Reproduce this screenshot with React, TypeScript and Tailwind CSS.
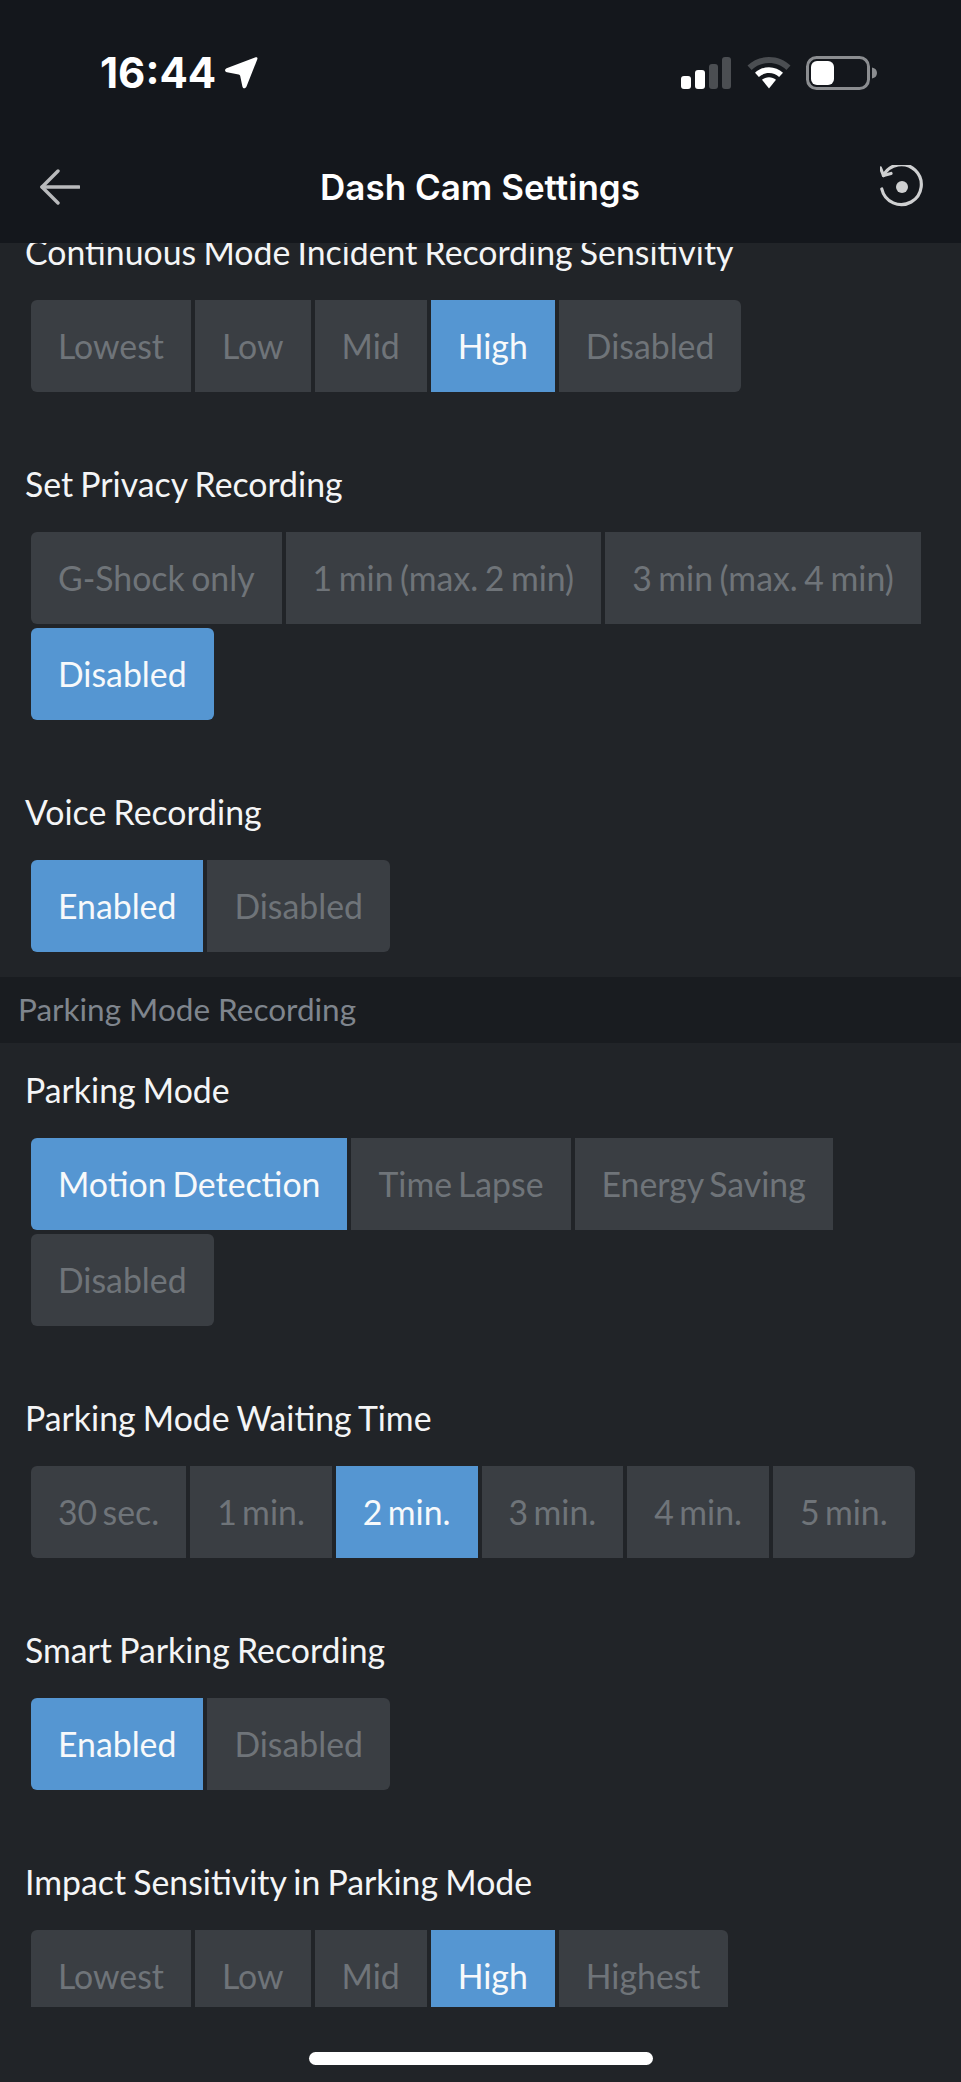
import React from 'react';

interface SegmentProps {
  options: string[];
  active: string;
  // last option sits alone on its own line, so it gets all four corners
  wrapsLast?: boolean;
  spacing?: string;
}

const Segments: React.FC<SegmentProps> = ({ options, active, wrapsLast, spacing = '[word-spacing:-2.8px]' }) => {
  return (
    <div className="flex flex-wrap gap-[4px] pl-[31px] pr-[20px]">
      {options.map((opt, i) => {
        const isFirst = i === 0;
        const isLast = i === options.length - 1;
        return (
          <div
            key={opt}
            className={`h-[92px] flex items-center px-[27px] text-[33.8px] ${spacing} ${
              opt === active ? 'bg-[#5596d2] text-[#f7f9fb]' : 'bg-[#3a3e43] text-[#6f7479]'
            } ${isFirst || (isLast && wrapsLast) ? 'rounded-l-[6px]' : ''} ${isLast ? 'rounded-r-[6px]' : ''}`}
          >
            {opt}
          </div>
        );
      })}
    </div>
  );
};

const Setting: React.FC<{ label: string; flush?: boolean } & SegmentProps> = ({ label, flush, ...rest }) => {
  return (
    <div className={`pt-[25px] pb-[25px] ${flush ? '' : 'mb-[20px]'}`}>
      <div className="h-[44px] mb-[26px] pl-[25px] flex items-center text-[33.8px] [word-spacing:-1.4px] text-[#f4f5f6] whitespace-nowrap">
        {label}
      </div>
      <Segments {...rest} />
    </div>
  );
};

const StatusIcons = () => (
  <div className="flex items-center">
    <svg width="50" height="32" viewBox="0 0 50 32" className="mr-[16px]">
      <rect x="0" y="19" width="10" height="13" rx="3" fill="#ffffff" />
      <rect x="14" y="13" width="10" height="19" rx="3" fill="#ffffff" />
      <rect x="28" y="7" width="9" height="25" rx="3" fill="#4b4e52" />
      <rect x="41" y="0" width="9" height="32" rx="3" fill="#4b4e52" />
    </svg>
    <svg width="44" height="32" viewBox="0 0 44 32" className="mr-[15px]">
      <path d="M22 0C13.5 0 6 3.2 0.5 8.6L4.6 13C9.2 8.7 15.3 6.1 22 6.1S34.8 8.7 39.4 13L43.5 8.6C38 3.2 30.5 0 22 0Z" fill="#4b4e52" />
      <path d="M22 10.2C16.6 10.2 11.7 12.3 8 15.7L11.9 19.9C14.6 17.5 18.1 16.1 22 16.1S29.4 17.5 32.1 19.9L36 15.7C32.3 12.3 27.4 10.2 22 10.2Z" fill="#ffffff" />
      <path d="M22 20.2C19.3 20.2 16.9 21.2 15 22.8L22 31.5L29 22.8C27.1 21.2 24.7 20.2 22 20.2Z" fill="#ffffff" />
    </svg>
    <svg width="72" height="34" viewBox="0 0 72 34">
      <rect x="1.5" y="1.5" width="61" height="31" rx="9" fill="none" stroke="#8b8d90" strokeWidth="3" />
      <rect x="5" y="5" width="23" height="24" rx="6" fill="#ffffff" />
      <path d="M66 11.5C69 12 71 14 71 17S69 22 66 22.5Z" fill="#8b8d90" />
    </svg>
  </div>
);

export default function App() {
  return (
    <div
      className="w-[961px] h-[2082px] overflow-hidden flex flex-col bg-[#212428]"
      style={{ fontFamily: 'Lato, "Noto Sans", sans-serif' }}
    >
      {/* Header */}
      <div className="h-[243px] shrink-0 bg-[#14171c] relative z-10 font-['Inter',sans-serif]">
        <div className="h-[130px] pl-[100px] pr-[83px] pt-[16px] flex items-center justify-between">
          <div className="flex items-center text-white text-[42px] font-bold leading-none">
            <span>16:44</span>
            <svg width="34" height="34" viewBox="0 0 34 34" className="ml-[8px]">
              <path d="M31 1.5C33 0.6 34 1.8 33.2 3.6L22.5 30.5C21.5 33 19 32.8 18.4 30.4L16.2 20C16 19 15.5 18.6 14.6 18.4L3 16.2C0.6 15.6 0.4 13.2 2.6 12.2Z" fill="#ffffff" />
            </svg>
          </div>
          <StatusIcons />
        </div>
        <div className="h-[113px] pl-[40px] pr-[38px] flex items-center justify-between">
          <svg width="40" height="36" viewBox="0 0 40 36" fill="none" stroke="#b9babc" strokeWidth="3.4" strokeLinecap="round" strokeLinejoin="round">
            <path d="M39 18H2" />
            <path d="M18 2L2 18L18 34" />
          </svg>
          <div className="text-white text-[35px] font-semibold pt-[2px]">Dash Cam Settings</div>
          <svg width="43" height="44" viewBox="0 0 43 44" fill="none">
            <path d="M3.5 10.5A20 20 0 1 1 1.8 24" stroke="#cfd0d1" strokeWidth="3.2" strokeLinecap="round" />
            <path d="M0.5 3L3.5 10.5L11 8.5" stroke="#cfd0d1" strokeWidth="3.2" strokeLinecap="round" strokeLinejoin="round" />
            <circle cx="22" cy="22" r="6" fill="#cfd0d1" />
          </svg>
        </div>
      </div>

      {/* Scrolled settings list, cut off by the header and the home bar */}
      <div className="h-[1764px] shrink-0 overflow-hidden">
        <div className="-mt-[38px]">
          <Setting
            label="Continuous Mode Incident Recording Sensitivity"
            options={['Lowest', 'Low', 'Mid', 'High', 'Disabled']}
            active="High"
          />
          <Setting
            label="Set Privacy Recording"
            options={['G-Shock only', '1 min (max. 2 min)', '3 min (max. 4 min)', 'Disabled']}
            active="Disabled"
            wrapsLast
            spacing="[word-spacing:-2.1px]"
          />
          <Setting label="Voice Recording" options={['Enabled', 'Disabled']} active="Enabled" flush />

          <div className="h-[66px] bg-[#191c20] pl-[18px] flex items-center text-[31.5px] text-[#7f858d]">
            Parking Mode Recording
          </div>

          <Setting
            label="Parking Mode"
            options={['Motion Detection', 'Time Lapse', 'Energy Saving', 'Disabled']}
            active="Motion Detection"
            wrapsLast
          />
          <Setting
            label="Parking Mode Waiting Time"
            options={['30 sec.', '1 min.', '2 min.', '3 min.', '4 min.', '5 min.']}
            active="2 min."
            spacing="[word-spacing:-3.3px]"
          />
          <Setting label="Smart Parking Recording" options={['Enabled', 'Disabled']} active="Enabled" />
          <Setting
            label="Impact Sensitivity in Parking Mode"
            options={['Lowest', 'Low', 'Mid', 'High', 'Highest']}
            active="High"
          />
        </div>
      </div>

      {/* Home indicator */}
      <div className="flex-1 flex justify-center pt-[45px]">
        <div className="w-[344px] h-[13px] rounded-full bg-white" />
      </div>
    </div>
  );
}
